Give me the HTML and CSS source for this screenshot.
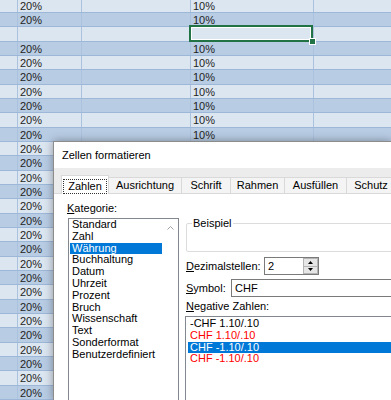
FILE: index.html
```html
<!DOCTYPE html>
<html lang="de">
<head>
    <meta charset="UTF-8">
    <meta name="viewport" content="width=device-width, initial-scale=1.0">
    <title>Zellen formatieren</title>
    <link rel="stylesheet" href="styles.css">
</head>
<body>

<!-- Tabelle im Hintergrund -->
<div class="sheet">
    <div class="row"><div class="cell col-a"></div><div class="cell col-b">20%</div><div class="cell col-c"></div><div class="cell col-d">10%</div><div class="cell col-e"></div></div>
    <div class="row"><div class="cell col-a"></div><div class="cell col-b">20%</div><div class="cell col-c"></div><div class="cell col-d">10%</div><div class="cell col-e"></div></div>
    <div class="row"><div class="cell col-a"></div><div class="cell col-b"></div><div class="cell col-c"></div><div class="cell col-d active"></div><div class="cell col-e"></div></div>
    <div class="row"><div class="cell col-a"></div><div class="cell col-b">20%</div><div class="cell col-c"></div><div class="cell col-d">10%</div><div class="cell col-e"></div></div>
    <div class="row"><div class="cell col-a"></div><div class="cell col-b">20%</div><div class="cell col-c"></div><div class="cell col-d">10%</div><div class="cell col-e"></div></div>
    <div class="row"><div class="cell col-a"></div><div class="cell col-b">20%</div><div class="cell col-c"></div><div class="cell col-d">10%</div><div class="cell col-e"></div></div>
    <div class="row"><div class="cell col-a"></div><div class="cell col-b">20%</div><div class="cell col-c"></div><div class="cell col-d">10%</div><div class="cell col-e"></div></div>
    <div class="row"><div class="cell col-a"></div><div class="cell col-b">20%</div><div class="cell col-c"></div><div class="cell col-d">10%</div><div class="cell col-e"></div></div>
    <div class="row"><div class="cell col-a"></div><div class="cell col-b">20%</div><div class="cell col-c"></div><div class="cell col-d">10%</div><div class="cell col-e"></div></div>
    <div class="row"><div class="cell col-a"></div><div class="cell col-b">20%</div><div class="cell col-c"></div><div class="cell col-d">10%</div><div class="cell col-e"></div></div>
    <div class="row"><div class="cell col-a"></div><div class="cell col-b">20%</div><div class="cell col-c"></div><div class="cell col-d">10%</div><div class="cell col-e"></div></div>
    <div class="row"><div class="cell col-a"></div><div class="cell col-b">20%</div><div class="cell col-c"></div><div class="cell col-d">10%</div><div class="cell col-e"></div></div>
    <div class="row"><div class="cell col-a"></div><div class="cell col-b">20%</div><div class="cell col-c"></div><div class="cell col-d">10%</div><div class="cell col-e"></div></div>
    <div class="row"><div class="cell col-a"></div><div class="cell col-b">20%</div><div class="cell col-c"></div><div class="cell col-d">10%</div><div class="cell col-e"></div></div>
    <div class="row"><div class="cell col-a"></div><div class="cell col-b">20%</div><div class="cell col-c"></div><div class="cell col-d">10%</div><div class="cell col-e"></div></div>
    <div class="row"><div class="cell col-a"></div><div class="cell col-b">20%</div><div class="cell col-c"></div><div class="cell col-d">10%</div><div class="cell col-e"></div></div>
    <div class="row"><div class="cell col-a"></div><div class="cell col-b">20%</div><div class="cell col-c"></div><div class="cell col-d">10%</div><div class="cell col-e"></div></div>
    <div class="row"><div class="cell col-a"></div><div class="cell col-b">20%</div><div class="cell col-c"></div><div class="cell col-d">10%</div><div class="cell col-e"></div></div>
    <div class="row"><div class="cell col-a"></div><div class="cell col-b">20%</div><div class="cell col-c"></div><div class="cell col-d">10%</div><div class="cell col-e"></div></div>
    <div class="row"><div class="cell col-a"></div><div class="cell col-b">20%</div><div class="cell col-c"></div><div class="cell col-d">10%</div><div class="cell col-e"></div></div>
    <div class="row"><div class="cell col-a"></div><div class="cell col-b">20%</div><div class="cell col-c"></div><div class="cell col-d">10%</div><div class="cell col-e"></div></div>
    <div class="row"><div class="cell col-a"></div><div class="cell col-b">20%</div><div class="cell col-c"></div><div class="cell col-d">10%</div><div class="cell col-e"></div></div>
    <div class="row"><div class="cell col-a"></div><div class="cell col-b">20%</div><div class="cell col-c"></div><div class="cell col-d">10%</div><div class="cell col-e"></div></div>
    <div class="row"><div class="cell col-a"></div><div class="cell col-b">20%</div><div class="cell col-c"></div><div class="cell col-d">10%</div><div class="cell col-e"></div></div>
    <div class="row"><div class="cell col-a"></div><div class="cell col-b">20%</div><div class="cell col-c"></div><div class="cell col-d">10%</div><div class="cell col-e"></div></div>
    <div class="row"><div class="cell col-a"></div><div class="cell col-b">20%</div><div class="cell col-c"></div><div class="cell col-d">10%</div><div class="cell col-e"></div></div>
    <div class="row"><div class="cell col-a"></div><div class="cell col-b">20%</div><div class="cell col-c"></div><div class="cell col-d">10%</div><div class="cell col-e"></div></div>
    <div class="row"><div class="cell col-a"></div><div class="cell col-b">20%</div><div class="cell col-c"></div><div class="cell col-d">10%</div><div class="cell col-e"></div></div>
</div>

<!-- Dialog -->
<div class="dialog">
    <div class="dialog-title">Zellen formatieren</div>

    <div class="tabs">
        <div class="tab is-active"><span class="focus">Zahlen</span></div>
        <div class="tab">Ausrichtung</div>
        <div class="tab">Schrift</div>
        <div class="tab">Rahmen</div>
        <div class="tab">Ausfüllen</div>
        <div class="tab">Schutz</div>
    </div>

    <div class="panel">
        <div class="category">
            <div class="label"><u>K</u>ategorie:</div>
            <div class="listbox">
                <ul class="items">
                    <li>Standard</li>
                    <li>Zahl</li>
                    <li class="selected">Währung</li>
                    <li>Buchhaltung</li>
                    <li>Datum</li>
                    <li>Uhrzeit</li>
                    <li>Prozent</li>
                    <li>Bruch</li>
                    <li>Wissenschaft</li>
                    <li>Text</li>
                    <li>Sonderformat</li>
                    <li>Benutzerdefiniert</li>
                </ul>
                <div class="scrollbar">
                    <svg width="7" height="4" viewBox="0 0 7 4"><polyline points="0.5,3.5 3.5,0.5 6.5,3.5" fill="none" stroke="#a0a0a0" stroke-width="1"/></svg>
                </div>
            </div>
        </div>

        <div class="options">
            <fieldset class="sample">
                <legend>Beispiel</legend>
                <div class="sample-body"></div>
            </fieldset>

            <div class="field">
                <div class="label label-decimals"><u>D</u>ezimalstellen:</div>
                <div class="input input-decimals">
                    <span>2</span>
                    <div class="spin">
                        <div class="spin-btn"><svg width="5" height="3" viewBox="0 0 5 3"><polygon points="0,3 2.5,0 5,3" fill="#000"/></svg></div>
                        <div class="spin-btn"><svg width="5" height="3" viewBox="0 0 5 3"><polygon points="0,0 5,0 2.5,3" fill="#000"/></svg></div>
                    </div>
                </div>
            </div>

            <div class="field field-symbol">
                <div class="label label-symbol"><u>S</u>ymbol:</div>
                <div class="input input-symbol"><span>CHF</span></div>
            </div>

            <div class="label label-negative"><u>N</u>egative Zahlen:</div>
            <ul class="listbox negatives">
                <li>-CHF 1.10/.10</li>
                <li class="red">CHF 1.10/.10</li>
                <li class="selected">CHF -1.10/.10</li>
                <li class="red">CHF -1.10/.10</li>
            </ul>
        </div>
    </div>
</div>

</body>
</html>
```

FILE: styles.css
```css
body {
    margin: 0;
    width: 391px;
    height: 400px;
    overflow: hidden;
    position: relative;
    font-family: "Liberation Sans", Arial, sans-serif;
    background-color: #dce6f1;
}

/* Tabelle */
.sheet {
    margin-top: -1px;
    height: 401px;
    overflow: hidden;
    font-size: 11px;
    color: #1e1e1e;
}

.row {
    display: flex;
    height: 14px;
    box-sizing: border-box;
    border-bottom: 1px solid #9db7d9;
    background-color: #dce6f1;
}

.row:nth-child(even) {
    background-color: #b8cce4;
}

.row:nth-child(3n) {
    height: 15px;
}

.cell {
    display: flex;
    align-items: center;
    box-sizing: border-box;
    padding-left: 2px;
    border-right: 1px solid #abc2df;
    position: relative;
}

.col-a { width: 18px; }
.col-b { width: 64px; }
.col-c { width: 109px; }
.col-d { width: 123px; }
.col-e { flex: 1; border-right: none; }

.cell.active::after {
    content: '';
    position: absolute;
    left: -2px;
    top: -2px;
    right: 0;
    bottom: -1px;
    border: 2px solid #217346;
    box-shadow: inset 0 0 0 1px #fff;
}

.cell.active::before {
    content: '';
    position: absolute;
    right: -3px;
    bottom: -4px;
    width: 5px;
    height: 5px;
    background-color: #217346;
    border: 1px solid #fff;
    z-index: 1;
}

/* Dialog */
.dialog {
    position: absolute;
    left: 53px;
    top: 141px;
    width: 338px;
    height: 259px;
    overflow: hidden;
    background-color: #fff;
    border-left: 1px solid #8c8c8c;
    border-top: 1px solid #8c8c8c;
    box-shadow: 0 0 9px rgba(0, 0, 0, 0.35);
    font-size: 11px;
    color: #000;
}

.dialog-title {
    height: 26px;
    line-height: 26px;
    padding-left: 8px;
}

.tabs {
    display: flex;
    align-items: flex-end;
    height: 26px;
    box-sizing: border-box;
    padding-left: 7px;
    background-color: #ececec;
    border-bottom: 1px solid #d9d9d9;
}

.tab {
    flex-shrink: 0;
    height: 16px;
    line-height: 15px;
    box-sizing: border-box;
    text-align: center;
    margin-left: -1px;
    background-color: #f4f4f4;
    border: 1px solid #d9d9d9;
    border-bottom: none;
}

.tab:nth-child(2) { width: 74px; }
.tab:nth-child(3) { width: 50px; }
.tab:nth-child(4) { width: 55px; }
.tab:nth-child(5) { width: 63px; }
.tab:nth-child(6) { width: 50px; }

.tab.is-active {
    width: 48px;
    height: 19px;
    margin-left: 0;
    margin-bottom: -1px;
    padding-top: 3px;
    background-color: #fff;
    position: relative;
}

.focus {
    display: inline-block;
    line-height: 11px;
    padding: 1px 4px;
    outline: 1px dotted #333;
}

.panel {
    display: flex;
    gap: 7px;
    padding: 8px 0 0 13px;
}

.label {
    line-height: 13px;
    white-space: nowrap;
}

.category {
    flex-shrink: 0;
    width: 112px;
}

.listbox {
    margin: 3px 0 0 1px;
    height: 200px;
    box-sizing: border-box;
    border: 1px solid #828790;
    background-color: #fff;
}

.category .listbox {
    display: flex;
    width: 111px;
}

.items,
.negatives {
    list-style: none;
    padding: 0;
}

.items {
    margin: 0;
    width: 93px;
}

.items li,
.negatives li {
    line-height: 11.8px;
    padding-left: 2px;
    margin-left: 1px;
    white-space: nowrap;
}

.items .selected,
.negatives .selected {
    background-color: #0078d7;
    color: #fff;
}

.scrollbar {
    width: 16px;
    display: flex;
    justify-content: center;
    padding-top: 7px;
    box-sizing: border-box;
}

.options {
    flex-shrink: 0;
    width: 220px;
}

.sample {
    margin: 15px 0 0;
    padding: 0;
    border: 1px solid #dcdcdc;
    border-radius: 2px;
}

.sample legend {
    margin-left: 5px;
    padding: 0 1px;
    line-height: 12px;
}

.sample-body {
    height: 22px;
}

.field {
    display: flex;
    align-items: center;
    margin-top: 5px;
    height: 18px;
}

.field-symbol {
    margin-top: 4px;
}

.label-decimals { width: 78px; }
.label-symbol { width: 45px; }

.input {
    display: flex;
    align-items: center;
    height: 18px;
    box-sizing: border-box;
    border: 1px solid #7a7a7a;
    padding-left: 3px;
    background-color: #fff;
}

.input-decimals {
    width: 55px;
}

.input-symbol {
    flex: 1;
}

.spin {
    display: flex;
    flex-direction: column;
    margin-left: auto;
    width: 15px;
    height: 16px;
    box-sizing: border-box;
    border: 1px solid #b4b4b4;
}

.spin-btn {
    flex: 1;
    display: flex;
    align-items: center;
    justify-content: center;
    background-color: #e6e6e6;
}

.spin-btn + .spin-btn {
    border-top: 1px solid #b4b4b4;
}

.label-negative {
    margin-top: 3px;
}

.negatives {
    margin: 3px 0 0 -1px;
    padding-top: 1px;
}

.negatives li {
    margin-left: 2px;
}

.negatives .red {
    color: #ff0000;
}
```
